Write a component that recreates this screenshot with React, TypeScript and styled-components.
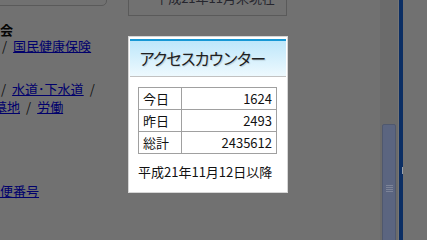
import styled, { createGlobalStyle } from "styled-components";

const GlobalStyle = createGlobalStyle`
  html, body {
    margin: 0;
    padding: 0;
    background: #717171;
  }
  body {
    font-family: "Noto Sans CJK JP", "Noto Sans", sans-serif;
  }
`;

const Page = styled.div`
  position: relative;
  width: 427px;
  height: 240px;
  overflow: hidden;
  display: flex;
  background: #717171;
`;

const Main = styled.div`
  width: 380px;
  flex-shrink: 0;
  display: flex;
  flex-direction: column;
`;

const TopRow = styled.div`
  display: flex;
  align-items: flex-start;
  margin-top: -20px;
  height: 36px;
  flex-shrink: 0;
`;

const NoticeBox = styled.div<{ $offset: number; $width: number; $height: number; $radius?: number }>`
  box-sizing: border-box;
  flex-shrink: 0;
  margin-left: ${(p) => p.$offset}px;
  width: ${(p) => p.$width}px;
  height: ${(p) => p.$height}px;
  border: 1px solid #5a5a5a;
  border-radius: 0 0 ${(p) => p.$radius ?? 0}px 0;
  display: flex;
  align-items: flex-end;
  justify-content: flex-end;
  padding: 0 11px 10px 0;
  font-size: 13px;
  line-height: 14px;
  color: #26262e;
  white-space: nowrap;
`;

const Line = styled.div<{ $top: number; $indent: number }>`
  margin-top: ${(p) => p.$top}px;
  margin-left: ${(p) => p.$indent}px;
  font-size: 13px;
  line-height: 16px;
  white-space: nowrap;
  color: #0c0c0c;
`;

const Heading = styled.span`
  font-weight: bold;
  color: #050505;
`;

const Link = styled.a`
  color: #00006c;
  text-decoration: underline;
`;

const Sep = styled.span`
  margin: 0 6px;
  color: #121212;
`;

const ScrollTrack = styled.div`
  width: 19px;
  flex-shrink: 0;
  background: #6b6b6b;
  border-right: 1px solid #767676;
  display: flex;
  flex-direction: column;
  padding-top: 124px;
  box-sizing: border-box;
`;

const Thumb = styled.div`
  flex: 1;
  margin: 0 2px -13px;
  background: #5b6580;
  border: 1px solid #4f586e;
  border-radius: 2px 2px 0 0;
  display: flex;
  align-items: center;
  justify-content: center;
`;

const Grip = styled.div`
  width: 7px;
  height: 7px;
  background: repeating-linear-gradient(
    to bottom,
    #7d8498 0px,
    #7d8498 1px,
    transparent 1px,
    transparent 2px
  );
`;

const BlueEdge = styled.div`
  position: relative;
  width: 4px;
  flex-shrink: 0;
  background: #0b2e64;

  &::after {
    content: "";
    position: absolute;
    right: 0;
    top: 167px;
    width: 1px;
    height: 7px;
    background: #9aa0aa;
  }
`;

const RightArea = styled.div`
  width: 24px;
  flex-shrink: 0;
  background: #717171;
`;

const Popup = styled.div`
  position: absolute;
  left: 128px;
  top: 36px;
  width: 160px;
  box-sizing: border-box;
  background: #ffffff;
  border: 1px solid #d6d6d6;
  padding: 2px 1px 0;
`;

const Header = styled.div`
  height: 35px;
  border-top: 2px solid #1798d5;
  border-bottom: 1px solid #c2c2c2;
  background: linear-gradient(to bottom, #bde7fb, #eef9fe);
  display: flex;
  align-items: center;
  padding-left: 9px;
`;

const Title = styled.div`
  font-size: 16px;
  line-height: 35px;
  letter-spacing: -2px;
  color: #202020;
  text-shadow: 1px 1px 1px rgba(0, 0, 0, 0.15);
  white-space: nowrap;
`;

const Body = styled.div`
  padding: 10px 8px 12px;
`;

const CountTable = styled.table`
  width: 139px;
  border-collapse: collapse;
  font-size: 13px;
  line-height: 16px;
  color: #111;
`;

const Cell = styled.td<{ $value?: boolean }>`
  height: 22px;
  padding: 0 ${(p) => (p.$value ? "4px" : "0")} 0 ${(p) => (p.$value ? "0" : "4px")};
  border: 1px solid #a0a0a0;
  text-align: ${(p) => (p.$value ? "right" : "left")};
  width: ${(p) => (p.$value ? "auto" : "43px")};
  box-sizing: border-box;
  white-space: nowrap;
`;

const Since = styled.div`
  margin-top: 10px;
  font-size: 13px;
  line-height: 16px;
  color: #111;
  white-space: nowrap;
`;

const counts = [
  { label: "今日", value: "1624" },
  { label: "昨日", value: "2493" },
  { label: "総計", value: "2435612" },
];

export default function App() {
  return (
    <>
      <GlobalStyle />
      <Page>
        <Main>
          <TopRow>
            <NoticeBox $offset={-10} $width={117} $height={26} $radius={5} />
            <NoticeBox $offset={21} $width={159} $height={36}>
              平成21年11月末現在
            </NoticeBox>
          </TopRow>
          <Line $top={6} $indent={-13}>
            <Heading>社会</Heading>
          </Line>
          <Line $top={0} $indent={-4}>
            <Sep>/</Sep>
            <Link>国民健康保険</Link>
          </Line>
          <Line $top={27} $indent={-5}>
            <Sep>/</Sep>
            <Link>水道･下水道</Link>
            <Sep>/</Sep>
          </Line>
          <Line $top={2} $indent={-6}>
            <Link>墓地</Link>
            <Sep>/</Sep>
            <Link>労働</Link>
          </Line>
          <Line $top={68} $indent={-13}>
            <Link>郵便番号</Link>
          </Line>
        </Main>
        <ScrollTrack>
          <Thumb>
            <Grip />
          </Thumb>
        </ScrollTrack>
        <BlueEdge />
        <RightArea />

        <Popup>
          <Header>
            <Title>アクセスカウンター</Title>
          </Header>
          <Body>
            <CountTable>
              <tbody>
                {counts.map((row) => (
                  <tr key={row.label}>
                    <Cell>{row.label}</Cell>
                    <Cell $value>{row.value}</Cell>
                  </tr>
                ))}
              </tbody>
            </CountTable>
            <Since>平成21年11月12日以降</Since>
          </Body>
        </Popup>
      </Page>
    </>
  );
}
